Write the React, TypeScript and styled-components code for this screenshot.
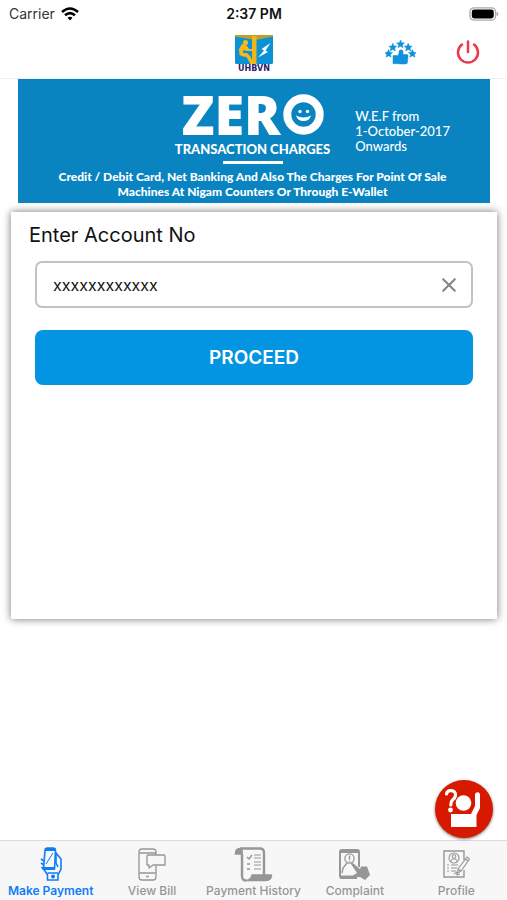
import React, { useState } from "react";
import styled, { createGlobalStyle } from "styled-components";

const Global = createGlobalStyle`
  *, *::before, *::after { box-sizing: border-box; }
  body { margin: 0; background: #fff; font-family: Inter, "Liberation Sans", sans-serif; color: #111; }
  button, input { font: inherit; }
  h1, h2, p { margin: 0; }
  svg { display: block; flex: none; }
`;

const Screen = styled.div`
  display: flex;
  flex-direction: column;
  min-height: 100vh;
`;

const StatusBar = styled.div`
  display: grid;
  grid-template-columns: 1fr auto 1fr;
  align-items: center;
  height: 28px;
  padding: 0 8px 0 9px;
  font-size: 14px;
  line-height: 20px;
`;

const Carrier = styled.div`
  display: flex;
  align-items: center;
  gap: 6px;
  color: #333;
`;

const Clock = styled.time`
  font-size: 14px;
  font-weight: 600;
  color: #111;
`;

const BatterySlot = styled.div`
  justify-self: end;
`;

const Header = styled.header`
  display: grid;
  grid-template-columns: 1fr auto 1fr;
  align-items: center;
  height: 50px;
  padding: 0 27px;
`;

const HeaderLogo = styled.div`
  grid-column: 2;
`;

const HeaderActions = styled.div`
  display: flex;
  align-items: center;
  justify-content: flex-end;
  gap: 40px;
  padding-bottom: 2px;
`;

const IconButton = styled.button`
  display: grid;
  place-items: center;
  padding: 0;
  border: 0;
  background: none;
  color: #888;
  cursor: pointer;
`;

const Main = styled.main`
  flex: 1;
  border-top: 1px solid #efefef;
`;

const Banner = styled.section`
  margin: 0 17px 0 18px;
  padding: 15px 15px 4px 12px;
  background: #0984c1;
  color: #fff;
  font-family: Lato, "Open Sans", sans-serif;
`;

const BannerTop = styled.div`
  display: grid;
  grid-template-columns: 1fr auto 1fr;
`;

const BannerTitle = styled.div`
  grid-column: 2;
  display: flex;
  flex-direction: column;
  align-items: center;
`;

const Zero = styled.h1`
  display: flex;
  align-items: center;
  gap: 2px;
  height: 40px;
  font-family: "Open Sans", sans-serif;
  font-size: 54px;
  font-weight: 800;
  line-height: 40px;
`;

const Charges = styled.h2`
  margin-top: 7px;
  font-size: 13px;
  font-weight: 900;
  line-height: 16px;
  white-space: nowrap;
`;

const Rule = styled.div`
  width: 60px;
  height: 3px;
  margin-top: 4px;
  background: #fff;
`;

const Effective = styled.p`
  padding: 15px 0 0 25px;
  font-size: 13px;
  font-weight: 500;
  line-height: 15px;
  white-space: nowrap;
`;

const BannerNote = styled.p`
  margin-top: 5px;
  text-align: center;
  font-size: 12px;
  font-weight: 900;
  line-height: 15px;
`;

const Card = styled.form`
  margin: 9px 10px 0 11px;
  min-height: 407px;
  padding: 10px 24px 24px;
  background: #fff;
  box-shadow: 0 0 8px rgba(0, 0, 0, 0.55);
`;

const FieldLabel = styled.label`
  display: block;
  margin-left: -6px;
  font-size: 20px;
  line-height: 26px;
`;

const Field = styled.div`
  display: flex;
  align-items: center;
  height: 47px;
  margin-top: 13px;
  padding: 0 14px 0 16px;
  border: 2px solid #c2c2c2;
  border-radius: 7px;
`;

const AccountInput = styled.input`
  flex: 1;
  min-width: 0;
  padding: 0;
  border: 0;
  outline: 0;
  background: none;
  color: #111;
  font-size: 16px;
  line-height: 24px;
`;

const Proceed = styled.button`
  display: block;
  width: 100%;
  height: 55px;
  margin-top: 22px;
  border: 0;
  border-radius: 8px;
  background: #0394e2;
  color: #fff;
  font-size: 19px;
  font-weight: 600;
  cursor: pointer;
`;

const HelpButton = styled.button`
  position: fixed;
  right: 14px;
  bottom: 62px;
  width: 58px;
  height: 58px;
  padding: 0;
  border: 0;
  border-radius: 50%;
  background: #d71900;
  box-shadow: 0 1px 3px rgba(0, 0, 0, 0.55);
  cursor: pointer;
`;

const TabBar = styled.nav`
  display: grid;
  grid-template-columns: repeat(5, 1fr);
  height: 60px;
  border-top: 1px solid #dcdcdc;
  background: #f7f7f7;
`;

const Tab = styled.a<{ $active?: boolean }>`
  display: flex;
  flex-direction: column;
  align-items: center;
  padding-top: 4px;
  color: ${(p) => (p.$active ? "#117df5" : "#969696")};
  font-size: 12px;
  font-weight: ${(p) => (p.$active ? 600 : 500)};
  line-height: 16px;
  text-decoration: none;
  white-space: nowrap;
`;

const TabIcon = styled.span`
  display: grid;
  place-items: center;
  height: 38px;
`;

const Wifi = () => (
  <svg width="18" height="14" viewBox="0 0 18 14" fill="none" stroke="#000" strokeWidth="2.6">
    <path d="M1 5Q9-2 17 5" />
    <path d="M4 8.3Q9 4 14 8.3" />
    <path d="M6.5 10.8Q9 8.5 11.5 10.8L9 13.5Z" fill="#000" stroke="none" />
  </svg>
);

const Battery = () => (
  <svg width="30" height="14" viewBox="0 0 30 14">
    <rect x="1" y="0.8" width="25.6" height="12.4" rx="4" fill="#fff" stroke="#aaa" strokeWidth="1.3" />
    <rect x="2.8" y="2.5" width="22" height="9" rx="2.4" fill="#000" />
    <path d="M27.6 4.7Q29.5 5.5 29.5 7T27.6 9.3Z" fill="#aaa" />
  </svg>
);

const LogoCaption = styled.text`
  font: 700 8px "DejaVu Sans", sans-serif;
  fill: #29206f;
`;

const Logo = () => (
  <svg width="40" height="37" viewBox="0 0 40 37" role="img" aria-label="UHBVN">
    <rect x="1" y="0" width="38" height="29" rx="1.5" fill="#0b91d5" />
    <path d="M1 0H39V1.5L22 5L19 4.5L2 2Z" fill="#b8a22d" />
    <path d="M18 1H22.5V29H18Z" fill="#f1b51c" />
    <circle cx="11.5" cy="7.5" r="2.6" fill="#f8b81c" />
    <path d="M8 9Q11 9 13 11L15 14H19V16L13 16L9.5 15L9 18L13 18L16 21L20 29H16.5L12.5 22L9 21.5L5.5 20L5 14Z" fill="#f8b81c" />
    <path d="M36.5 8L27.5 14L30 15.5L24 22.5L34 17L31.5 15.5Z" fill="#fff" />
    <LogoCaption x="20" y="36" textAnchor="middle">UHBVN</LogoCaption>
  </svg>
);

const starPath = "M0-4L1.2-1.3L4-1L1.9 .9L2.5 3.7L0 2.2L-2.5 3.7L-1.9 .9L-4-1L-1.2-1.3Z";

const Rating = () => (
  <svg width="31" height="26" viewBox="0 0 31 26" fill="#1191dc" stroke="#1191dc" strokeWidth="0.5">
    {[[3.6, 14.5], [7.8, 8.2], [15.5, 5], [23.2, 8.2], [27.4, 14.5]].map(([x, y]) => (
      <path key={x} d={starPath} transform={`translate(${x} ${y})`} />
    ))}
    <path d="M8 16.5H13L14 14V12Q16 9.5 18 12V15.5H22Q23.5 16 23 17.5L22.5 23.5Q22.3 25 20.5 25H14L13 24.3V24.7H8Z" />
  </svg>
);

const Power = () => (
  <svg width="24" height="26" viewBox="0 0 24 26" fill="none" stroke="#ed3948" strokeWidth="2.5" strokeLinecap="round">
    <path d="M6 5.5A10 10 0 1 0 18 5.5M12 2.5V13" />
  </svg>
);

const Smile = () => (
  <svg width="41" height="41" viewBox="0 0 41 41" role="img" aria-label="O">
    <circle cx="20.5" cy="20.5" r="16.2" fill="none" stroke="#fff" strokeWidth="8" />
    <circle cx="17" cy="17.5" r="1.7" fill="#fff" />
    <circle cx="24.5" cy="17.5" r="1.7" fill="#fff" />
    <path d="M13 21.5Q20.5 25.5 28 21.5Q26.5 27 20.5 27T13 21.5Z" fill="#fff" />
  </svg>
);

const Cross = () => (
  <svg width="16" height="16" viewBox="0 0 16 16" fill="none" stroke="#858585" strokeWidth="2.1" strokeLinecap="round">
    <path d="M2.2 2.2L13.8 13.8M13.8 2.2L2.2 13.8" />
  </svg>
);

const Help = () => (
  <svg width="58" height="58" viewBox="0 0 58 58" fill="#fff">
    <path d="M11.5 14Q12 10.5 16 10.7Q21 11 20.5 15.5Q20.2 18 17.5 20Q15.8 21.5 15.8 25" fill="none" stroke="#fff" strokeWidth="3.2" strokeLinecap="round" />
    <circle cx="15.5" cy="30" r="2.4" />
    <circle cx="28.5" cy="23" r="7.8" />
    <path d="M16 34H36L40 26V14.5Q40.2 12.2 42.5 12.2T45 14.5V28L41.5 35V47H16Z" />
  </svg>
);

const PaymentIcon = () => (
  <svg width="22" height="34" viewBox="0 0 22 34" fill="none" stroke="currentColor" strokeWidth="1.6">
    <path d="M5 3.5Q5 1 7.5 1H13Q15.5 1 15.5 3.5L14.5 22H3.5Z" />
    <path d="M5 2.5H15M4 21.5H14.5" strokeWidth="3" />
    <path d="M6 17L13 6" strokeWidth="1" />
    <path d="M1 12L4 14M1 16L4 18M1.5 20L5 24L7.5 28V33H18V28L21 22V12L16 6V16L18 20M7.5 26H18" />
    <circle cx="13" cy="29.5" r="1.2" fill="currentColor" />
  </svg>
);

const BillIcon = () => (
  <svg width="28" height="33" viewBox="0 0 28 33" fill="none" stroke="currentColor" strokeWidth="1.3" strokeLinejoin="round">
    <path d="M18 7V4Q18 1 15 1H4Q1 1 1 4V29Q1 32 4 32H15Q18 32 18 29V18M1 5H18M1 25H18M8 28.5H11" />
    <path d="M10 7H26Q27 7 27 8V17H15L11 20V17H9V8Q9 7 10 7Z" />
  </svg>
);

const HistoryIcon = () => (
  <svg width="39" height="35" viewBox="0 0 39 35" fill="none" stroke="currentColor" strokeWidth="2.4" strokeLinejoin="round">
    <path d="M8 7V29Q8 33.5 12 33.5M6 1.5H26Q30 1.5 30 6V28" />
    <path d="M1.5 7Q1.5 1.5 6 1.5Q9 3 8 7ZM18 28H37.5Q37 33.5 32 33.5H12Q17.5 33 18 28Z" fill="currentColor" strokeWidth="1.6" />
    <path d="M13 10L15 12L18 8M13 17H16M13 22H16" strokeWidth="1.4" />
    <path d="M20 8H27M20 11H27M20 15H27M20 18H27M20 22H27" strokeWidth="1.2" />
  </svg>
);

const ComplaintIcon = () => (
  <svg width="32" height="31" viewBox="0 0 32 31" fill="none" stroke="currentColor" strokeWidth="2">
    <path d="M20 18V3Q20 1 18 1H3Q1 1 1 3V27Q1 29 3 29H18" />
    <path d="M1 2.5H20M1 28H18" strokeWidth="3" />
    <circle cx="10.5" cy="9.5" r="4.6" strokeWidth="1.3" />
    <path d="M10.5 6.5V10.5M10.5 11.5V12.5M3 24L4 19L8 14M12.5 14L15 17" strokeWidth="1.4" />
    <path d="M12 15Q13.5 13.5 15.5 15.5L21 20L22 17.5H28L31 26L26 31L21 28L15 28.5L14 26.5L18 24Z" fill="currentColor" stroke="none" />
  </svg>
);

const ProfileIcon = () => (
  <svg width="27" height="28" viewBox="0 0 27 28" fill="none" stroke="currentColor" strokeWidth="1.1">
    <path d="M21 10V1H1V27H21V20" strokeWidth="1.4" />
    <circle cx="11" cy="8" r="5" />
    <circle cx="11" cy="6.5" r="1.8" />
    <path d="M7.5 11.5Q11 6 14.5 11.5M4 15H6M8 15H15M4 18H6M8 18H14M4 21H6M8 21H13M11 24L14 22V25L17 24" />
    <path d="M24 7L26.5 9L18 21L14.5 23L15 19ZM22.5 9L25 11M15 19L18 21" />
  </svg>
);

const tabs = [
  { label: "Make Payment", href: "#payment", Icon: PaymentIcon },
  { label: "View Bill", href: "#bill", Icon: BillIcon },
  { label: "Payment History", href: "#history", Icon: HistoryIcon },
  { label: "Complaint", href: "#complaint", Icon: ComplaintIcon },
  { label: "Profile", href: "#profile", Icon: ProfileIcon },
];

export default function App() {
  const [account, setAccount] = useState("xxxxxxxxxxxx");
  return (
    <Screen>
      <Global />
      <StatusBar>
        <Carrier>Carrier <Wifi /></Carrier>
        <Clock>2:37 PM</Clock>
        <BatterySlot><Battery /></BatterySlot>
      </StatusBar>
      <Header>
        <HeaderLogo><Logo /></HeaderLogo>
        <HeaderActions>
          <IconButton aria-label="Rate us"><Rating /></IconButton>
          <IconButton aria-label="Log out"><Power /></IconButton>
        </HeaderActions>
      </Header>
      <Main>
        <Banner>
          <BannerTop>
            <BannerTitle>
              <Zero>ZER<Smile /></Zero>
              <Charges>TRANSACTION CHARGES</Charges>
              <Rule />
            </BannerTitle>
            <Effective>W.E.F from<br />1-October-2017<br />Onwards</Effective>
          </BannerTop>
          <BannerNote>
            Credit / Debit Card, Net Banking And Also The Charges For Point Of Sale
            <br />
            Machines At Nigam Counters Or Through E-Wallet
          </BannerNote>
        </Banner>
        <Card onSubmit={(e) => e.preventDefault()}>
          <FieldLabel htmlFor="account">Enter Account No</FieldLabel>
          <Field>
            <AccountInput id="account" value={account} onChange={(e) => setAccount(e.target.value)} />
            <IconButton type="button" aria-label="Clear" onClick={() => setAccount("")}><Cross /></IconButton>
          </Field>
          <Proceed type="submit">PROCEED</Proceed>
        </Card>
      </Main>
      <HelpButton aria-label="Help"><Help /></HelpButton>
      <TabBar>
        {tabs.map(({ label, href, Icon }, i) => (
          <Tab key={label} href={href} $active={i === 0}>
            <TabIcon><Icon /></TabIcon>
            {label}
          </Tab>
        ))}
      </TabBar>
    </Screen>
  );
}
